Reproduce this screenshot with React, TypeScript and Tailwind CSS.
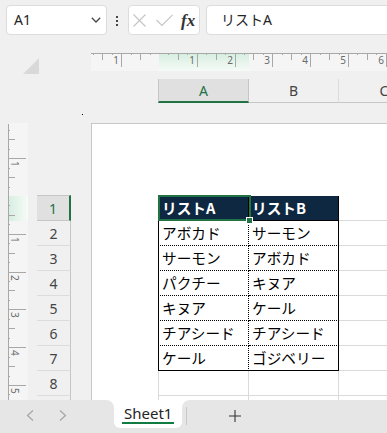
import React from 'react';

const STEP = 37.795 / 4;

const rows: [string, string][] = [
  ['アボカド', 'サーモン'],
  ['サーモン', 'アボカド'],
  ['パクチー', 'キヌア'],
  ['キヌア', 'ケール'],
  ['チアシード', 'チアシード'],
  ['ケール', 'ゴジベリー'],
];

function HRuler() {
  const W = 296;
  const O = 68;
  const ticks: { x: number; len: number; label?: number }[] = [];
  for (let k = -7; k <= 24; k++) {
    if (k === 0) continue;
    const x = Math.round(O + k * STEP);
    if (x < 0 || x > W) continue;
    const len = k % 4 === 0 ? 14 : k % 2 === 0 ? 7 : 2;
    ticks.push({ x, len, label: k % 4 === 0 ? Math.abs(k / 4) : undefined });
  }
  return (
    <svg width={W} height={18} className="block">
      <defs>
        <linearGradient id="hg" x1="0" y1="0" x2="0" y2="1">
          <stop offset="0" stopColor="#d6ede0" />
          <stop offset="1" stopColor="#f6fbf7" />
        </linearGradient>
      </defs>
      <rect width={W} height={18} fill="#f5f5f5" />
      <rect x={O} width={90} height={18} fill="url(#hg)" />
      <line x1={0} y1={0.5} x2={W} y2={0.5} stroke="#a8a8a8" />
      {ticks.map((t) => (
        <g key={t.x}>
          <line x1={t.x + 0.5} y1={0} x2={t.x + 0.5} y2={t.len} stroke="#a8a8a8" />
          {t.label !== undefined && (
            <text x={t.x - 2} y={11} textAnchor="end" fontSize={10} fill="#6b6b6b" fontFamily="Noto Sans, sans-serif">
              {t.label}
            </text>
          )}
        </g>
      ))}
    </svg>
  );
}

function VRuler() {
  const H = 277;
  const O = 73;
  const ticks: { y: number; len: number; label?: number }[] = [];
  for (let k = -7; k <= 22; k++) {
    if (k === 0) continue;
    const y = Math.round(O + k * STEP);
    if (y < 0 || y > H) continue;
    const len = k % 4 === 0 ? 18 : k % 2 === 0 ? 7 : 2;
    ticks.push({ y, len, label: k % 4 === 0 ? Math.abs(k / 4) : undefined });
  }
  return (
    <svg width={20} height={H} className="block">
      <defs>
        <linearGradient id="vg" x1="0" y1="0" x2="1" y2="0">
          <stop offset="0" stopColor="#d6ede0" />
          <stop offset="1" stopColor="#f6fbf7" />
        </linearGradient>
      </defs>
      <rect width={20} height={H} fill="#f5f5f5" />
      <rect y={O} width={20} height={25} fill="url(#vg)" />
      <line x1={0.5} y1={1} x2={0.5} y2={H} stroke="#a8a8a8" />
      {ticks.map((t) => (
        <g key={t.y}>
          <line x1={0} y1={t.y + 0.5} x2={t.len} y2={t.y + 0.5} stroke="#a8a8a8" />
          {t.label !== undefined && (
            <text
              transform={`translate(3 ${t.y + 3}) rotate(90)`}
              fontSize={10}
              fill="#6b6b6b"
              fontFamily="Noto Sans, sans-serif"
            >
              {t.label}
            </text>
          )}
        </g>
      ))}
    </svg>
  );
}

export default function App() {
  return (
    <div className="w-[387px] h-[433px] overflow-hidden bg-[#f0f0f0] flex flex-col font-['Noto_Sans','Noto_Sans_CJK_JP',sans-serif] text-[#242424]">
      {/* Toolbar: name box, formula buttons, formula bar */}
      <div className="h-[45px] shrink-0 flex items-start pt-[5px] pl-[6px]">
        <div className="w-[101px] h-[30px] shrink-0 bg-white border border-[#dcdcdc] rounded-[4px] flex items-center justify-between pl-[7px] pr-[5px]">
          <span className="text-[14px] leading-none">A1</span>
          <svg width="10" height="6" viewBox="0 0 10 6">
            <polyline points="0.8,0.8 5,5 9.2,0.8" fill="none" stroke="#444" strokeWidth="1.3" />
          </svg>
        </div>
        <div className="ml-[9px] mt-[11px] w-[3px] flex flex-col items-center gap-[2px]">
          <span className="w-[2px] h-[2px] bg-[#444]" />
          <span className="w-[2px] h-[2px] bg-[#444]" />
          <span className="w-[2px] h-[2px] bg-[#444]" />
        </div>
        <div className="ml-[10px] w-[72px] h-[30px] shrink-0 bg-white border border-[#dcdcdc] rounded-[4px] flex items-center pl-[4px]">
          <svg width="13" height="13" viewBox="0 0 13 13">
            <path d="M0.5 0.5 L12.5 12.5 M12.5 0.5 L0.5 12.5" stroke="#c4c4c4" strokeWidth="1.1" />
          </svg>
          <svg className="ml-[10px]" width="17" height="13" viewBox="0 0 17 13">
            <polyline points="0.5,6 6,11.5 16.5,0.8" fill="none" stroke="#c4c4c4" strokeWidth="1.1" />
          </svg>
          <span className="ml-[8px] font-['Liberation_Serif',serif] italic font-bold text-[17px] leading-none text-[#333]">fx</span>
        </div>
        <div className="ml-[6px] w-[200px] h-[30px] shrink-0 bg-white border border-[#dcdcdc] rounded-[4px] flex items-center pl-[14px]">
          <span className="text-[14px] leading-none">リストA</span>
        </div>
      </div>

      {/* Ruler + column headers */}
      <div className="h-[78px] shrink-0 flex">
        <div className="w-[91px] shrink-0 pt-[13px] pl-[23px]">
          <svg width="16" height="16" viewBox="0 0 16 16" className="block">
            <polygon points="16,0 16,16 0,16" fill="#d9d9d9" />
          </svg>
          <div className="ml-[59px] mt-[40px] w-px h-px bg-black" />
        </div>
        <div className="flex-1 flex flex-col pt-[8px]">
          <HRuler />
          <div className="mt-[8px] h-[24px] flex pl-[67px] text-[14px]">
            <div className="w-[91px] shrink-0 bg-[#e0e0e0] border-l border-r border-[#c6c6c6] border-b-2 border-b-[#217346] flex items-center justify-center text-[#217346]">
              A
            </div>
            <div className="w-[90px] shrink-0 border-r border-r-[#dcdcdc] border-b border-b-[#c6c6c6] flex items-center justify-center text-[#444]">
              B
            </div>
            <div className="w-[90px] shrink-0 border-b border-[#c6c6c6] flex items-center justify-center text-[#444]">
              C
            </div>
          </div>
        </div>
      </div>

      {/* Vertical ruler, row headers, page */}
      <div className="h-[277px] shrink-0 flex">
        <div className="w-[91px] shrink-0 flex">
          <div className="ml-[8px] w-[20px]">
            <VRuler />
          </div>
          <div className="ml-[9px] w-[34px] pt-[72px] flex flex-col text-[14px] text-[#444]">
            <div className="h-[26px] shrink-0 bg-[#e0e0e0] border-t border-b border-[#c6c6c6] border-r-2 border-r-[#217346] flex items-center justify-center text-[#217346]">
              1
            </div>
            {[2, 3, 4, 5, 6, 7, 8, 9].map((n) => (
              <div key={n} className="h-[25px] shrink-0 border-b border-b-[#dcdcdc] border-r border-r-[#c6c6c6] flex items-center justify-center">
                {n}
              </div>
            ))}
          </div>
        </div>

        <div className="flex-1 bg-white border-l border-t border-[#c8c8c8] overflow-hidden">
          <div className="ml-[66px] mt-[72px] flex flex-col font-['Noto_Sans_CJK_JP',sans-serif] text-[14.67px]">
            {/* header row */}
            <div className="h-[25px] flex shrink-0">
              <div className="relative w-[91px] shrink-0 bg-[#0e2841] border-l border-r border-b border-black flex items-center pl-[3px] font-bold text-white">
                リストA
                <div className="absolute -left-px -top-px w-[93px] h-[26px] border-2 border-[#217346]">
                  <div className="absolute left-[86px] top-[20px] w-[7px] h-[7px] bg-[#217346] border border-white" />
                </div>
              </div>
              <div className="w-[90px] shrink-0 bg-[#0e2841] border-r border-b border-black flex items-center pl-[3px] font-bold text-white">
                リストB
              </div>
              <div className="w-[90px] shrink-0 border-r border-b border-[#dadada]" />
            </div>
            {rows.map(([a, b], i) => {
              const last = i === rows.length - 1;
              return (
                <div key={i} className="h-[25px] flex shrink-0 text-black">
                  <div
                    className={
                      last
                        ? 'w-[91px] shrink-0 border-l border-r border-b border-black [border-right-style:dotted] flex items-center pl-[3px]'
                        : 'w-[91px] shrink-0 border-l border-r border-b border-black [border-right-style:dotted] [border-bottom-style:dotted] flex items-center pl-[3px]'
                    }
                  >
                    {a}
                  </div>
                  <div
                    className={
                      last
                        ? 'w-[90px] shrink-0 border-r border-b border-black flex items-center pl-[3px]'
                        : 'w-[90px] shrink-0 border-r border-b border-black [border-bottom-style:dotted] flex items-center pl-[3px]'
                    }
                  >
                    {b}
                  </div>
                  <div className="w-[90px] shrink-0 border-r border-b border-[#dadada]" />
                </div>
              );
            })}
            {[8, 9].map((n) => (
              <div key={n} className="h-[25px] flex shrink-0">
                <div className="w-[91px] shrink-0 border-l border-r border-b border-[#dadada]" />
                <div className="w-[90px] shrink-0 border-r border-b border-[#dadada]" />
                <div className="w-[90px] shrink-0 border-r border-b border-[#dadada]" />
              </div>
            ))}
          </div>
        </div>
      </div>

      {/* Sheet tabs */}
      <div className="h-[33px] shrink-0 flex bg-white">
        <div className="w-[114px] shrink-0 bg-[#e6e6e6] rounded-tr-[8px] flex items-center pl-[26px] pb-[2px]">
          <svg width="8" height="11" viewBox="0 0 8 11">
            <polyline points="7,0.5 1.5,5.5 7,10.5" fill="none" stroke="#a6a6a6" strokeWidth="1.2" />
          </svg>
          <svg className="ml-[25px]" width="8" height="11" viewBox="0 0 8 11">
            <polyline points="1,0.5 6.5,5.5 1,10.5" fill="none" stroke="#a6a6a6" strokeWidth="1.2" />
          </svg>
        </div>
        <div className="w-[68px] shrink-0 bg-[#e6e6e6]">
          <div className="h-[28px] bg-white rounded-b-[6px] flex flex-col items-start pl-[8px] pt-[5px]">
            <span className="text-[15px] leading-[17px] px-[2px] border-b-2 border-[#107c41]">Sheet1</span>
          </div>
        </div>
        <div className="flex-1 bg-[#e6e6e6] rounded-tl-[8px] flex items-start pt-[7px]">
          <div className="ml-[4px] w-px h-[18px] bg-[#c8c8c8]" />
          <svg className="ml-[42px] mt-[3px]" width="12" height="12" viewBox="0 0 12 12">
            <path d="M6 0 V12 M0 6 H12" stroke="#333" strokeWidth="1.1" />
          </svg>
        </div>
      </div>
    </div>
  );
}
